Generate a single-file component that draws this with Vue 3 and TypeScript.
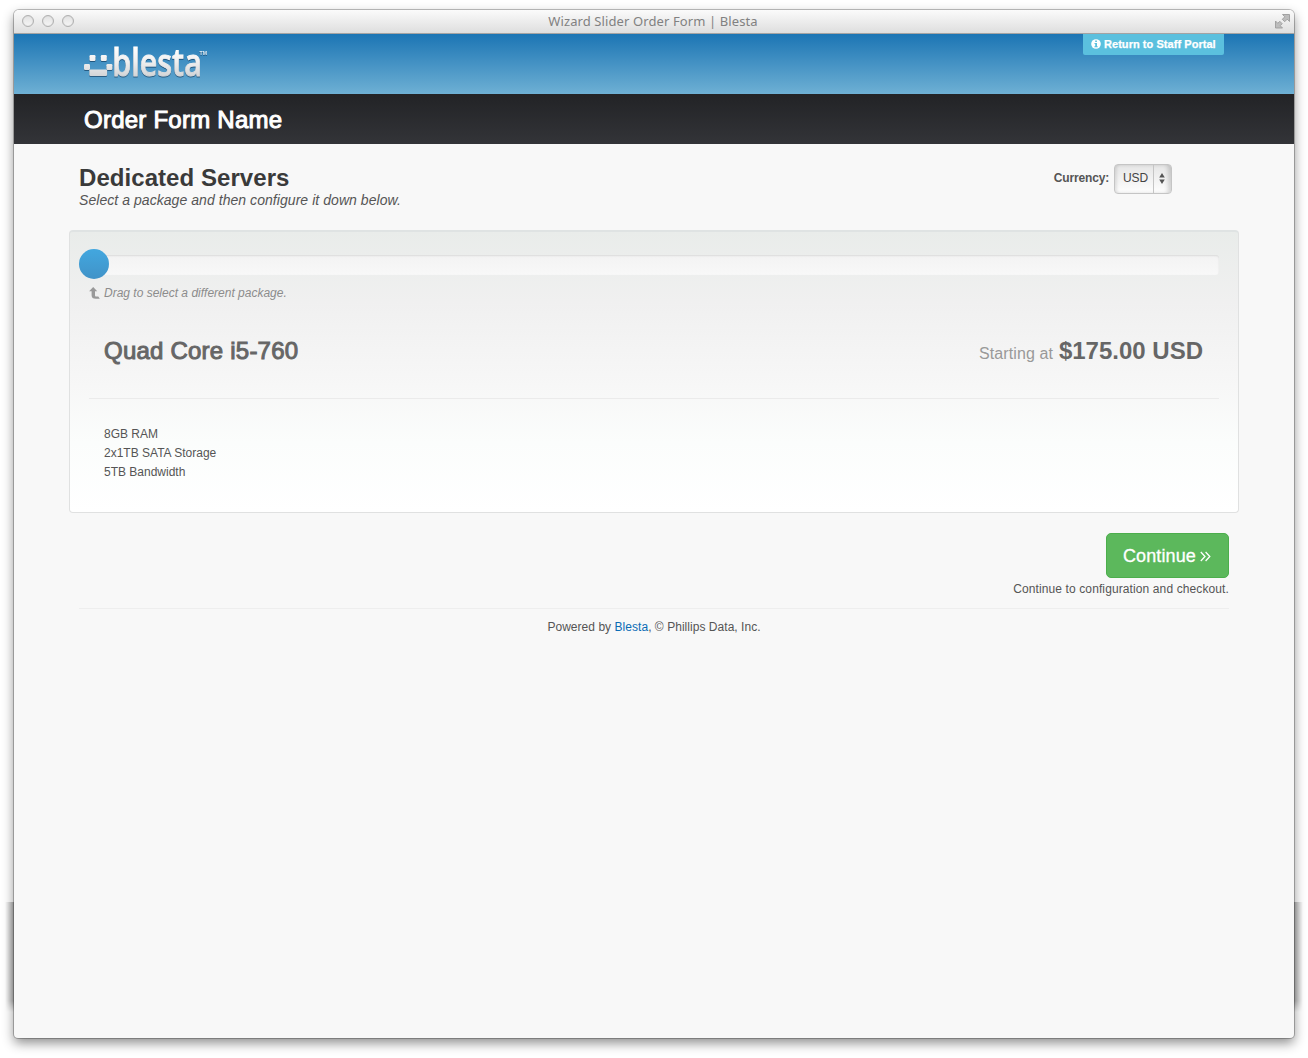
<script setup lang="ts">
import { ref } from 'vue'

const currency = ref('USD')
const features: string[] = ['8GB RAM', '2x1TB SATA Storage', '5TB Bandwidth']
</script>

<template>
  <div class="stage">
    <div class="side left"></div>
    <div class="side right"></div>
    <div class="window">
      <div class="titlebar">
        <div class="lights"><i></i><i></i><i></i></div>
        <span class="wintitle">Wizard Slider Order Form | Blesta</span>
        <svg class="expand" width="15" height="15" viewBox="0 0 15 15">
          <path d="M7.500.5h7v7l-2.300-2.300-2.500 2.500-2.400-2.400 2.500-2.500z" fill="#bcbcbc" stroke="#9c9c9c" stroke-width=".9" />
          <path d="M.5 7l2.300 2.300 2-2 2.400 2.400-2 2 2.300 2.300h-7z" fill="#bcbcbc" stroke="#9c9c9c" stroke-width=".9" />
        </svg>
      </div>

      <header class="header">
        <svg class="logo" width="126" height="48" viewBox="0 0 126 48">
          <defs>
            <linearGradient id="silver" x1="0" y1="3" x2="0" y2="32" gradientUnits="userSpaceOnUse">
              <stop offset="0" stop-color="#fff" />
              <stop offset=".5" stop-color="#f0f0f0" />
              <stop offset="1" stop-color="#d3d5d7" />
            </linearGradient>
          </defs>
          <g fill="url(#silver)">
            <rect x="5.500" y="11" width="6" height="6" rx="1.200" />
            <rect x="16.800" y="11" width="6" height="6" rx="1.200" />
            <rect x="0" y="20" width="6" height="6" rx="1.200" />
            <rect x="22.400" y="20" width="6" height="6" rx="1.200" />
            <rect x="5.300" y="25.400" width="17.800" height="6.600" rx="1.200" />
            <text x="28.300" y="31.700" textLength="89.500" lengthAdjust="spacingAndGlyphs" class="brand">blesta</text>
          </g>
          <text x="115.500" y="11.300" textLength="7.500" lengthAdjust="spacingAndGlyphs" class="tm">TM</text>
        </svg>
        <a class="portal">
          <svg width="10" height="10" viewBox="0 0 10 10">
            <circle cx="5" cy="5" r="4.800" fill="#fff" />
            <path d="M4.200 1.500h1.700v1.400h-1.700zM3.500 3.900h2.500v3.300h.7v1h-3.300v-1h.8v-2.300h-.7z" fill="#5bc0de" />
          </svg>
          <span>Return to Staff Portal</span>
        </a>
      </header>

      <div class="formname"><span>Order Form Name</span></div>

      <main class="content">
        <div class="intro">
          <div>
            <h3>Dedicated Servers</h3>
            <p>Select a package and then configure it down below.</p>
          </div>
          <div class="currency">
            <strong>Currency:</strong>
            <div class="select">
              <span>{{ currency }}</span>
              <div class="arrows">
                <svg width="6" height="11" viewBox="0 0 6 11"><path d="M3 0l2.800 4.600h-5.600zM3 11l2.800-4.600h-5.600z" fill="#555" /></svg>
              </div>
            </div>
          </div>
        </div>

        <section class="package">
          <div class="track"><div class="knob"></div></div>
          <div class="hint">
            <svg width="11" height="12" viewBox="0 0 11 12"><path d="M4.200 0l4 4.300H6V8c0 1 .4 1.600 1.300 1.600h2l1.500 2.200H6.800C4 11.800 2.600 10.700 2.600 8.300V4.300H.1z" fill="#999" /></svg>
            <em>Drag to select a different package.</em>
          </div>
          <div class="summary">
            <h4>Quad Core i5-760</h4>
            <div class="price"><small>Starting at</small><b>$175.00 USD</b></div>
          </div>
          <ul>
            <li v-for="f in features" :key="f">{{ f }}</li>
          </ul>
        </section>

        <div class="actions">
          <button>
            <span>Continue</span>
            <svg width="11" height="11" viewBox="0 0 11 11"><path d="M.8 1l4.200 4.500-4.200 4.500M5.600 1l4.200 4.500-4.200 4.500" fill="none" stroke="#fff" stroke-width="1.300" /></svg>
          </button>
          <p>Continue to configuration and checkout.</p>
        </div>
        <footer>Powered by <a>Blesta</a>, © Phillips Data, Inc.</footer>
      </main>
    </div>
  </div>
</template>

<style>
body { background: #fff; overflow: hidden; }
</style>

<style scoped>
* { box-sizing: border-box; }
.stage {
  position: relative;
  height: 1058px;
  padding: 10px 14px 20px;
  overflow: hidden;
  font-family: "Liberation Sans", Arial, sans-serif;
  font-size: 12px;
  color: #555;
}
h3, h4, p, ul { margin: 0; padding: 0; }
.window {
  position: relative;
  height: 1028px;
  background: #f8f8f8;
  border-radius: 5px 5px 4px 4px;
  box-shadow: 0 0 0 1px rgba(0, 0, 0, .24), 0 5px 12px rgba(0, 0, 0, .45);
}
.side {
  position: absolute;
  top: 902px;
  width: 9px;
  height: 110px;
  -webkit-mask-image: linear-gradient(#000 90%, transparent);
  mask-image: linear-gradient(#000 90%, transparent);
}
.left { left: 5px; background: linear-gradient(to right, transparent, rgba(0, 0, 0, .3)); }
.right { right: 5px; background: linear-gradient(to left, transparent, rgba(0, 0, 0, .3)); }
.titlebar {
  display: flex;
  align-items: center;
  justify-content: space-between;
  height: 24px;
  padding: 0 4px 0 8px;
  border-bottom: 1px solid #a3a3a3;
  border-radius: 5px 5px 0 0;
  background: linear-gradient(#fbfbfb, #dedede);
}
.lights { display: flex; gap: 8px; width: 60px; margin-top: -2px; }
.lights i {
  width: 12px;
  height: 12px;
  border: 1px solid #b0b0b0;
  border-radius: 50%;
  background: linear-gradient(#e2e2e2, #f5f5f5);
  box-shadow: inset 0 0 1px #bbb;
}
.wintitle { margin: -2px 6px 0 0; font: 13px/22px "Noto Sans", sans-serif; letter-spacing: .1px; color: #818181; }
.expand { margin: -1px 0 0 45px; }
.header {
  display: flex;
  justify-content: space-between;
  align-items: flex-start;
  height: 60px;
  padding: 0 70px;
  background: linear-gradient(#1c75b4, #6eb0d4);
}
.logo { margin-top: 10px; overflow: visible; filter: drop-shadow(0 1.500px .7px rgba(0, 30, 60, .5)); }
.brand { font: 600 38px "Open Sans", sans-serif; stroke: url(#silver); stroke-width: .9px; }
.tm { font: bold 5.500px "Liberation Sans", sans-serif; fill: #e3eff7; }
.portal {
  display: flex;
  align-items: center;
  gap: 3px;
  width: 141px;
  height: 21px;
  padding: 0 0 1px 8px;
  background: #5bc0de;
  border-radius: 0 0 2px 2px;
  color: #fff;
  font-size: 11px;
  font-weight: bold;
  letter-spacing: .05px;
  -webkit-text-stroke: .25px #fff;
  white-space: nowrap;
}
.portal span { line-height: 18px; padding-bottom: 1px; }
.formname {
  height: 50px;
  padding-left: 70px;
  background: linear-gradient(#222326, #333438);
  color: #fff;
  font-size: 24px;
  line-height: 51px;
  letter-spacing: .24px;
  -webkit-text-stroke: 1px #fff;
}
.content { padding: 20px 55px 0; }
.intro { display: flex; justify-content: space-between; height: 66px; padding: 0 67px 0 10px; }
.intro h3 { font-size: 24px; line-height: 28px; letter-spacing: .06px; color: #3a3a3a; }
.intro p { font-size: 14px; font-style: italic; line-height: 17px; letter-spacing: .055px; white-space: nowrap; }
.currency { display: flex; height: 30px; align-items: center; gap: 5px; }
.currency strong { padding-bottom: 2px; letter-spacing: -.16px; }
.select {
  display: flex;
  width: 58px;
  height: 30px;
  border: 1px solid #c5c5c5;
  border-radius: 4px;
  background: linear-gradient(#e6e6e6, #fefefe);
  box-shadow: inset 3px 0 3px -1px rgba(0, 0, 0, .1), inset -4px 0 4px -1px rgba(0, 0, 0, .16);
  line-height: 26px;
  color: #444;
}
.select span { width: 38px; padding-left: 8px; letter-spacing: -.1px; }
.arrows { display: flex; flex: 1; justify-content: center; align-items: center; padding: 0 1px 1px 0; border-left: 1px solid #c5c5c5; }
.package {
  height: 283px;
  padding: 23px 19px 0;
  border: 1px solid #e0e1e1;
  border-top: 2px solid #dfe3e3;
  border-radius: 4px;
  background: linear-gradient(#e9ecea, #f0f0f0 25%, #f7f7f7 55%, #fbfdfc 75%, #fff);
}
.track {
  position: relative;
  height: 20px;
  border-radius: 3px;
  background: linear-gradient(#f3f3f3, #f8f8f8);
  box-shadow: inset 0 1px 2px rgba(0, 0, 0, .1);
}
.knob {
  position: absolute;
  left: -10px;
  top: -6px;
  width: 30px;
  height: 30px;
  border-radius: 50%;
  background: linear-gradient(#42a7df, #4193c8);
}
.hint { display: flex; align-items: center; gap: 4px; height: 35px; color: #8c8c8c; }
.summary {
  display: flex;
  justify-content: space-between;
  height: 89px;
  padding: 24px 15px 0;
  border-bottom: 1px solid #ebebeb;
  white-space: nowrap;
}
.summary h4 { font-size: 24px; font-weight: 400; line-height: 34px; letter-spacing: .22px; -webkit-text-stroke: 1px #666; color: #666; }
.price { margin-right: 1px; line-height: 34px; color: #666; }
.price small { margin-right: 6px; font-size: 16px; letter-spacing: .08px; color: #999; }
.price b { font-size: 24px; }
ul { padding: 26px 15px 0; list-style: none; }
li { height: 19px; line-height: 19px; }
.actions { display: flex; flex-direction: column; align-items: flex-end; height: 96px; margin: 0 10px; padding-top: 20px; border-bottom: 1px solid #eee; }
button {
  display: flex;
  align-items: center;
  gap: 4px;
  width: 123px;
  height: 45px;
  padding: 1px 0 0 16px;
  border: 1px solid #4cae4c;
  border-radius: 5px;
  background: #5cb85c;
  font: 18px "Liberation Sans", sans-serif;
  letter-spacing: .1px;
  color: #fff;
  -webkit-text-stroke: .3px #fff;
}
.actions p { line-height: 22px; letter-spacing: .11px; }
footer { line-height: 36px; letter-spacing: .04px; text-align: center; }
footer a { color: #0b6cb5; }
</style>
